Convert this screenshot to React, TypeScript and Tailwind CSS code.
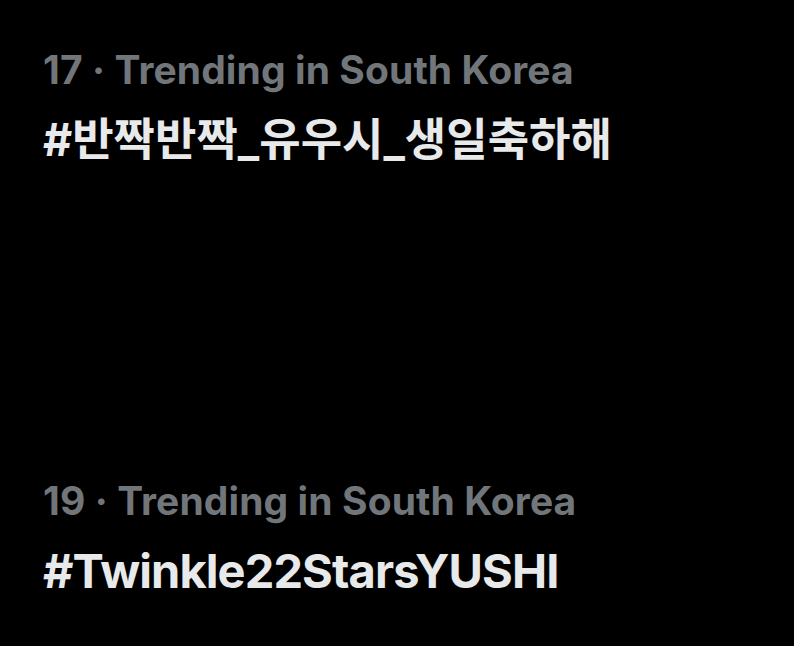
export default function App() {
  const trends = [
    { rank: 17, tag: "#반짝반짝_유우시_생일축하해", size: "text-[45px] tracking-normal" },
    { rank: 19, tag: "#Twinkle22StarsYUSHI", size: "text-[47px] tracking-[-0.9px]" },
  ];
  return (
    <div
      className="w-[794px] h-[646px] bg-black overflow-hidden flex flex-col gap-[310px] pl-[43px] pt-[47px]"
      style={{ fontFamily: '"Inter", "Noto Sans CJK KR", sans-serif' }}
    >
      {trends.map((t) => (
        <div key={t.rank} className="flex flex-col gap-[19px]">
          <div className="text-[39px] leading-[46px] font-bold text-[#71767b] tracking-[0.1px]">
            {t.rank} · Trending in South Korea
          </div>
          <div className={`${t.size} leading-[56px] font-bold text-[#e7e9ea]`}>{t.tag}</div>
        </div>
      ))}
    </div>
  );
}
